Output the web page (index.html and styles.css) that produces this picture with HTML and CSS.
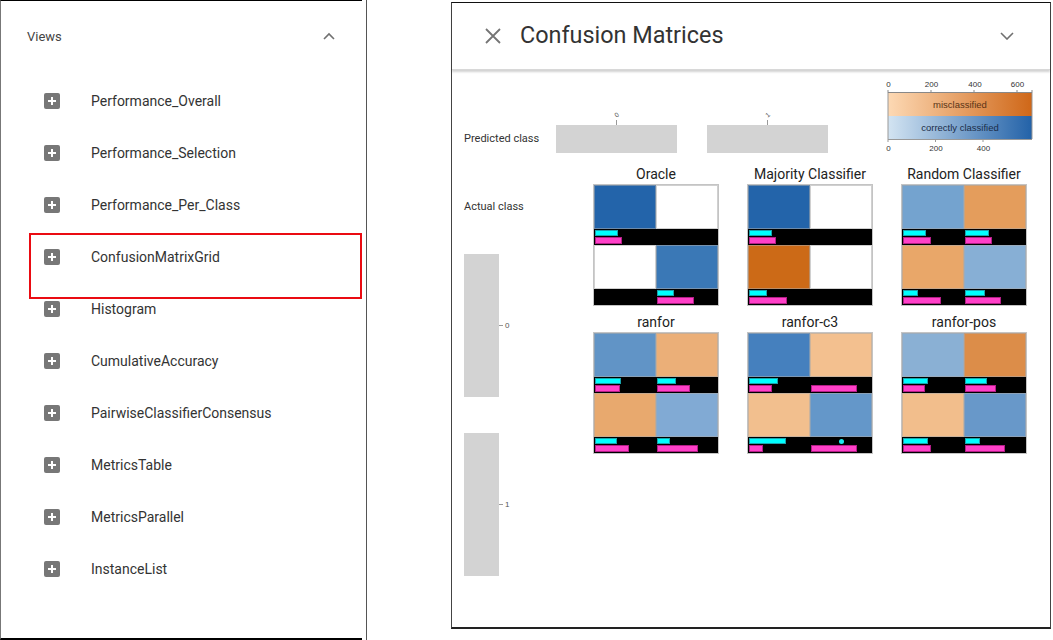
FILE: index.html
```html
<!DOCTYPE html>
<html lang="en">
<head>
<meta charset="utf-8">
<title>Views – Confusion Matrices</title>
<link rel="stylesheet" href="styles.css">
</head>
<body>
<div class="page">
  <aside class="left-wrap">
    <div class="left-panel">
      <div class="views-head">
        <span class="views-title">Views</span>
        <svg class="chev-up" width="12" height="8" viewBox="0 0 12 8"><polyline points="1,7 6,2 11,7" fill="none" stroke="#707070" stroke-width="1.6"/></svg>
      </div>
      <ul class="view-list">
        <li class="view-item"><svg class="plus" width="16" height="16" viewBox="0 0 16 16"><rect width="16" height="16" rx="2" fill="#777"/><path d="M8 4v8M4 8h8" stroke="#fff" stroke-width="2"/></svg><span class="view-name">Performance_Overall</span></li>
        <li class="view-item"><svg class="plus" width="16" height="16" viewBox="0 0 16 16"><rect width="16" height="16" rx="2" fill="#777"/><path d="M8 4v8M4 8h8" stroke="#fff" stroke-width="2"/></svg><span class="view-name">Performance_Selection</span></li>
        <li class="view-item"><svg class="plus" width="16" height="16" viewBox="0 0 16 16"><rect width="16" height="16" rx="2" fill="#777"/><path d="M8 4v8M4 8h8" stroke="#fff" stroke-width="2"/></svg><span class="view-name">Performance_Per_Class</span></li>
        <li class="view-item is-selected"><svg class="plus" width="16" height="16" viewBox="0 0 16 16"><rect width="16" height="16" rx="2" fill="#777"/><path d="M8 4v8M4 8h8" stroke="#fff" stroke-width="2"/></svg><span class="view-name">ConfusionMatrixGrid</span></li>
        <li class="view-item"><svg class="plus" width="16" height="16" viewBox="0 0 16 16"><rect width="16" height="16" rx="2" fill="#777"/><path d="M8 4v8M4 8h8" stroke="#fff" stroke-width="2"/></svg><span class="view-name">Histogram</span></li>
        <li class="view-item"><svg class="plus" width="16" height="16" viewBox="0 0 16 16"><rect width="16" height="16" rx="2" fill="#777"/><path d="M8 4v8M4 8h8" stroke="#fff" stroke-width="2"/></svg><span class="view-name">CumulativeAccuracy</span></li>
        <li class="view-item"><svg class="plus" width="16" height="16" viewBox="0 0 16 16"><rect width="16" height="16" rx="2" fill="#777"/><path d="M8 4v8M4 8h8" stroke="#fff" stroke-width="2"/></svg><span class="view-name">PairwiseClassifierConsensus</span></li>
        <li class="view-item"><svg class="plus" width="16" height="16" viewBox="0 0 16 16"><rect width="16" height="16" rx="2" fill="#777"/><path d="M8 4v8M4 8h8" stroke="#fff" stroke-width="2"/></svg><span class="view-name">MetricsTable</span></li>
        <li class="view-item"><svg class="plus" width="16" height="16" viewBox="0 0 16 16"><rect width="16" height="16" rx="2" fill="#777"/><path d="M8 4v8M4 8h8" stroke="#fff" stroke-width="2"/></svg><span class="view-name">MetricsParallel</span></li>
        <li class="view-item"><svg class="plus" width="16" height="16" viewBox="0 0 16 16"><rect width="16" height="16" rx="2" fill="#777"/><path d="M8 4v8M4 8h8" stroke="#fff" stroke-width="2"/></svg><span class="view-name">InstanceList</span></li>
      </ul>
    </div>
  </aside>

  <section class="cm-panel">
    <header class="cm-header">
      <svg class="close" width="18" height="18" viewBox="0 0 18 18"><path d="M2 2L16 16M16 2L2 16" stroke="#757575" stroke-width="1.8"/></svg>
      <h1 class="cm-title-main">Confusion Matrices</h1>
      <svg class="chev-down" width="14" height="8" viewBox="0 0 14 8"><polyline points="1,1 7,7 13,1" fill="none" stroke="#707070" stroke-width="1.6"/></svg>
    </header>

    <div class="cm-body">
      <div class="cm-top">
        <div class="pred">
          <div class="axis-label pred-label">Predicted class</div>
          <div class="pred-group"><span class="pred-tick-label">0</span><span class="pred-tick"></span><span class="pred-bar"></span></div>
          <div class="pred-group"><span class="pred-tick-label">1</span><span class="pred-tick"></span><span class="pred-bar"></span></div>
        </div>
        <svg class="legend" width="164" height="80" viewBox="0 0 164 80">
          <defs>
            <linearGradient id="gMis" x1="0" x2="1" y1="0" y2="0"><stop offset="0" stop-color="#fdd9b4"/><stop offset="1" stop-color="#cf6718"/></linearGradient>
            <linearGradient id="gCor" x1="0" x2="1" y1="0" y2="0"><stop offset="0" stop-color="#d3e4f2"/><stop offset="1" stop-color="#2362a8"/></linearGradient>
          </defs>
          <g class="legend-axis" text-anchor="middle">
            <text x="10.5" y="11.5">0</text><text x="53.5" y="11.5">200</text><text x="97" y="11.5">400</text><text x="139.5" y="11.5">600</text>
            <text x="10.5" y="76">0</text><text x="58" y="76">200</text><text x="105.5" y="76">400</text>
          </g>
          <path d="M10 15v3M53 15v3M96 15v3M139 15v3M154 15v3M10 17.5H154" stroke="#888" stroke-width="1" fill="none"/>
          <rect x="10" y="18" width="144" height="23" fill="url(#gMis)"/>
          <rect x="10" y="41" width="144" height="23" fill="url(#gCor)"/>
          <path d="M10 18v46M154 18v46M10 64.5H154M10 64v3M57.5 64v3M105 64v3" stroke="#999" stroke-width="1" fill="none"/>
          <text class="legend-text mis" x="82" y="33" text-anchor="middle">misclassified</text>
          <text class="legend-text cor" x="82" y="56" text-anchor="middle">correctly classified</text>
        </svg>
      </div>

      <div class="cm-main">
        <div class="actual">
          <div class="axis-label actual-label">Actual class</div>
          <div class="vbars">
            <div class="vbar-group"><span class="vbar"></span><span class="vtick"></span><span class="vtick-label">0</span></div>
            <div class="vbar-group"><span class="vbar"></span><span class="vtick"></span><span class="vtick-label">1</span></div>
          </div>
        </div>

        <div class="matrix-grid">
          <figure class="cm">
            <figcaption class="cm-title">Oracle</figcaption>
            <div class="cells">
              <div class="cell"><div class="swatch" style="background:#2364aa"></div><div class="strip"><span class="bar cyan" style="width:23px"></span><span class="bar pink" style="width:27px"></span></div></div>
              <div class="cell"><div class="swatch" style="background:#ffffff"></div><div class="strip"><span class="bar-gap"></span></div></div>
              <div class="cell"><div class="swatch" style="background:#ffffff"></div><div class="strip"><span class="bar-gap"></span></div></div>
              <div class="cell"><div class="swatch" style="background:#3a78b6"></div><div class="strip"><span class="bar cyan" style="width:17px"></span><span class="bar pink" style="width:37px"></span></div></div>
            </div>
          </figure>
          <figure class="cm">
            <figcaption class="cm-title">Majority Classifier</figcaption>
            <div class="cells">
              <div class="cell"><div class="swatch" style="background:#2364aa"></div><div class="strip"><span class="bar cyan" style="width:23px"></span><span class="bar pink" style="width:27px"></span></div></div>
              <div class="cell"><div class="swatch" style="background:#ffffff"></div><div class="strip"><span class="bar-gap"></span></div></div>
              <div class="cell"><div class="swatch" style="background:#cc6a17"></div><div class="strip"><span class="bar cyan" style="width:18px"></span><span class="bar pink" style="width:38px"></span></div></div>
              <div class="cell"><div class="swatch" style="background:#ffffff"></div><div class="strip"><span class="bar-gap"></span></div></div>
            </div>
          </figure>
          <figure class="cm">
            <figcaption class="cm-title">Random Classifier</figcaption>
            <div class="cells">
              <div class="cell"><div class="swatch" style="background:#74a3cf"></div><div class="strip"><span class="bar cyan" style="width:23px"></span><span class="bar pink" style="width:28px"></span></div></div>
              <div class="cell"><div class="swatch" style="background:#e49d5c"></div><div class="strip"><span class="bar cyan" style="width:24px"></span><span class="bar pink" style="width:27px"></span></div></div>
              <div class="cell"><div class="swatch" style="background:#e9a769"></div><div class="strip"><span class="bar cyan" style="width:15px"></span><span class="bar pink" style="width:38px"></span></div></div>
              <div class="cell"><div class="swatch" style="background:#87afd5"></div><div class="strip"><span class="bar cyan" style="width:20px"></span><span class="bar pink" style="width:36px"></span></div></div>
            </div>
          </figure>
          <figure class="cm">
            <figcaption class="cm-title">ranfor</figcaption>
            <div class="cells">
              <div class="cell"><div class="swatch" style="background:#6194c6"></div><div class="strip"><span class="bar cyan" style="width:26px"></span><span class="bar pink" style="width:25px"></span></div></div>
              <div class="cell"><div class="swatch" style="background:#ebaf78"></div><div class="strip"><span class="bar cyan" style="width:19px"></span><span class="bar pink" style="width:33px"></span></div></div>
              <div class="cell"><div class="swatch" style="background:#e8a96e"></div><div class="strip"><span class="bar cyan" style="width:22px"></span><span class="bar pink" style="width:34px"></span></div></div>
              <div class="cell"><div class="swatch" style="background:#81aad4"></div><div class="strip"><span class="bar cyan" style="width:13px"></span><span class="bar pink" style="width:41px"></span></div></div>
            </div>
          </figure>
          <figure class="cm">
            <figcaption class="cm-title">ranfor-c3</figcaption>
            <div class="cells">
              <div class="cell"><div class="swatch" style="background:#4580be"></div><div class="strip"><span class="bar cyan" style="width:29px"></span><span class="bar pink" style="width:23px"></span></div></div>
              <div class="cell"><div class="swatch" style="background:#f3c08f"></div><div class="strip"><span class="bar-gap"></span><span class="bar pink" style="width:46px"></span></div></div>
              <div class="cell"><div class="swatch" style="background:#f2bf8e"></div><div class="strip"><span class="bar cyan" style="width:37px"></span><span class="bar pink" style="width:14px"></span></div></div>
              <div class="cell"><div class="swatch" style="background:#6497c9"></div><div class="strip"><span class="bar-gap"><span class="dot" style="margin-left:28px"></span></span><span class="bar pink" style="width:46px"></span></div></div>
            </div>
          </figure>
          <figure class="cm">
            <figcaption class="cm-title">ranfor-pos</figcaption>
            <div class="cells">
              <div class="cell"><div class="swatch" style="background:#8ab0d4"></div><div class="strip"><span class="bar cyan" style="width:25px"></span><span class="bar pink" style="width:22px"></span></div></div>
              <div class="cell"><div class="swatch" style="background:#dc8d49"></div><div class="strip"><span class="bar cyan" style="width:22px"></span><span class="bar pink" style="width:31px"></span></div></div>
              <div class="cell"><div class="swatch" style="background:#f2be8c"></div><div class="strip"><span class="bar cyan" style="width:25px"></span><span class="bar pink" style="width:28px"></span></div></div>
              <div class="cell"><div class="swatch" style="background:#6898c9"></div><div class="strip"><span class="bar cyan" style="width:15px"></span><span class="bar pink" style="width:40px"></span></div></div>
            </div>
          </figure>
        </div>
      </div>
    </div>
  </section>
</div>
</body>
</html>
```

FILE: styles.css
```css
* { box-sizing: border-box; }

html, body {
  margin: 0;
  padding: 0;
  background: #ffffff;
}

body {
  width: 1053px;
  height: 640px;
  overflow: hidden;
  font-family: Roboto, "Liberation Sans", Arial, sans-serif;
  color: #333;
}

.page {
  display: flex;
  align-items: flex-start;
}

/* ---------- Left "Views" panel ---------- */
.left-wrap {
  flex: none;
  width: 367px;
  height: 640px;
  border-right: 1px solid #555;
}

.left-panel {
  width: 362px;
  height: 640px;
  border-top: 1px solid #000;
  border-bottom: 2px solid #000;
  border-left: 1px solid #777;
}

.views-head {
  height: 70px;
  display: flex;
  align-items: center;
  justify-content: space-between;
  padding: 0 27px 0 26px;
}

.views-title {
  font-size: 13px;
  color: #444;
}

.chev-up { display: block; }

.view-list {
  list-style: none;
  margin: 4px 0 0;
  padding: 0;
}

.view-item {
  position: relative;
  height: 52px;
  display: flex;
  align-items: center;
  padding-left: 43px;
}

.plus {
  flex: none;
  display: block;
  margin-right: 31px;
}

.view-name {
  font-size: 14px;
  color: #333;
}

.is-selected::after {
  content: "";
  position: absolute;
  left: 28px;
  top: 2px;
  width: 329px;
  height: 62px;
  border: 2px solid #ea0b12;
}

/* ---------- Right "Confusion Matrices" panel ---------- */
.cm-panel {
  flex: none;
  margin-left: 84px;
  margin-top: 2px;
  width: 600px;
  height: 627px;
  border: 1px solid #444;
  border-top-color: #111;
  border-bottom: 2px solid #222;
  display: flex;
  flex-direction: column;
}

.cm-header {
  position: relative;
  z-index: 1;
  flex: none;
  height: 67px;
  display: flex;
  align-items: center;
  padding: 0 36px 0 32px;
  border-bottom: 1px solid #d8d8d8;
  box-shadow: 0 2px 2px rgba(0, 0, 0, 0.18);
}

.close { display: block; flex: none; }

.cm-title-main {
  margin: 0 0 2px 18px;
  font-size: 23.4px;
  font-weight: 400;
  color: #333;
}

.chev-down {
  display: block;
  margin-left: auto;
}

.cm-body {
  flex: 1;
  padding-left: 12px;
}

.cm-top {
  display: flex;
  align-items: flex-start;
  height: 95px;
}

.axis-label {
  font-size: 11px;
  color: #333;
}

.pred {
  display: flex;
  align-items: flex-end;
  margin-top: 40px;
}

.pred-label {
  width: 92px;
  line-height: 26px;
  margin-bottom: 1px;
}

.pred-group {
  width: 121px;
  margin-right: 30px;
  display: flex;
  flex-direction: column;
  align-items: center;
}

.pred-tick-label {
  height: 10px;
  font-family: "Liberation Sans", Arial, sans-serif;
  font-size: 6.5px;
  line-height: 10px;
  color: #555;
  transform: rotate(-40deg);
}

.pred-tick {
  width: 1px;
  height: 5px;
  background: #999;
}

.pred-bar {
  width: 121px;
  height: 28px;
  background: #d3d3d3;
}

.legend {
  display: block;
  margin-left: auto;
  margin-top: 5px;
  margin-right: 8px;
  flex: none;
}

.legend-axis {
  font-family: "Liberation Sans", Arial, sans-serif;
  font-size: 8px;
  fill: #333;
}

.legend-text {
  font-family: "Liberation Sans", Arial, sans-serif;
  font-size: 9.5px;
}

.legend-text.mis { fill: #5a3416; }
.legend-text.cor { fill: #1b2d48; }

.cm-main {
  display: flex;
  align-items: flex-start;
}

.actual {
  flex: none;
  width: 130px;
}

.actual-label {
  line-height: 14px;
  margin-top: 35px;
}

.vbars {
  margin-top: 40px;
  display: flex;
  flex-direction: column;
  gap: 36px;
}

.vbar-group {
  display: flex;
  align-items: center;
}

.vbar {
  width: 35px;
  height: 143px;
  background: #d3d3d3;
}

.vtick {
  width: 4px;
  height: 1px;
  background: #999;
}

.vtick-label {
  margin-left: 2px;
  font-family: "Liberation Sans", Arial, sans-serif;
  font-size: 8px;
  color: #555;
}

.matrix-grid {
  display: grid;
  grid-template-columns: repeat(3, 124px);
  column-gap: 30px;
  row-gap: 8px;
}

.cm { margin: 0; }

.cm-title {
  font-size: 14px;
  line-height: 18px;
  text-align: center;
  color: #222;
  margin-bottom: 2px;
  white-space: nowrap;
}

.cells {
  display: grid;
  grid-template-columns: 62px 62px;
  width: 124px;
  box-shadow: 0 0 0 1px #c4c4c4;
}

.cell {
  height: 60px;
  display: flex;
  flex-direction: column;
}

.swatch {
  height: 44px;
  box-shadow: inset 0 0 0 1px rgba(170, 170, 170, 0.55);
}

.strip {
  height: 16px;
  background: #000;
  padding: 1px 0 0 1px;
  display: flex;
  flex-direction: column;
  align-items: flex-start;
  gap: 1px;
}

.bar {
  display: block;
}

.bar.cyan {
  height: 6px;
  background: #00ffff;
  border: 1px solid #18a3ad;
}

.bar.pink {
  height: 7px;
  background: #ff40c8;
  border: 1px solid #b21e86;
}

.bar-gap {
  display: flex;
  align-items: center;
  height: 6px;
}

.dot {
  width: 5px;
  height: 5px;
  border-radius: 50%;
  background: #1de9f0;
}
```
